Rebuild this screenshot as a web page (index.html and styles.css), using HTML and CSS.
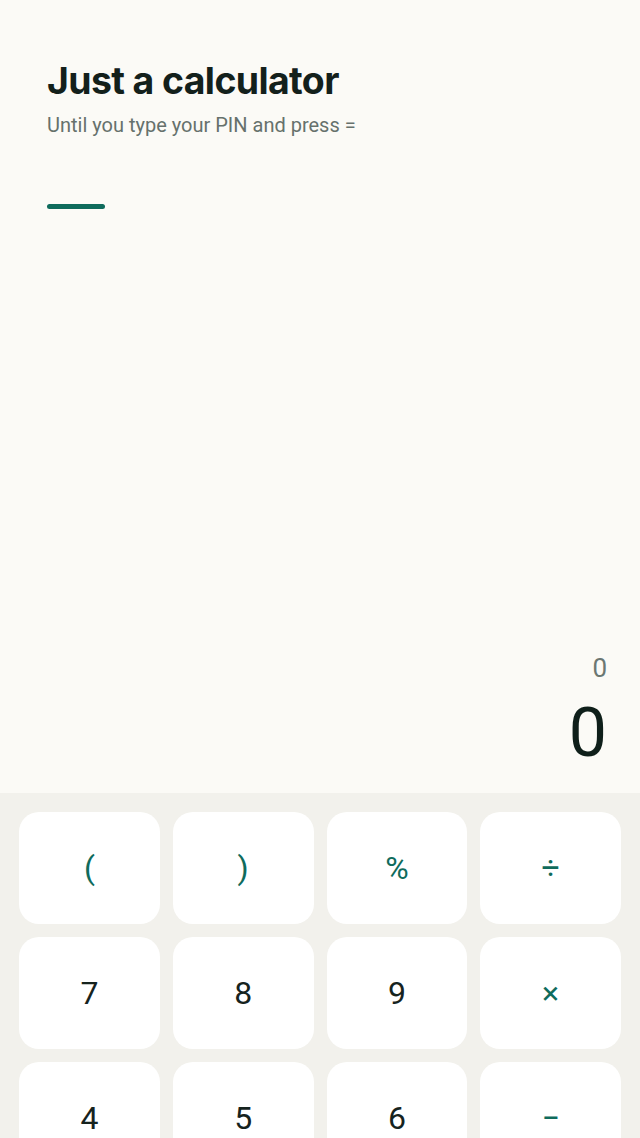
FILE: index.html
```html
<!DOCTYPE html>
<html lang="en">
<head>
<meta charset="utf-8">
<title>Just a calculator</title>
<link rel="stylesheet" href="styles.css">
</head>
<body>
<div class="app">
  <header class="head">
    <h1 class="title">Just a calculator</h1>
    <p class="sub">Until you type your PIN and press =</p>
    <div class="pin-line"></div>
  </header>
  <section class="display">
    <div class="expr">0</div>
    <div class="result">0</div>
  </section>
  <section class="pad">
    <button class="key op">(</button>
    <button class="key op">)</button>
    <button class="key op">%</button>
    <button class="key op">÷</button>
    <button class="key">7</button>
    <button class="key">8</button>
    <button class="key">9</button>
    <button class="key op">×</button>
    <button class="key">4</button>
    <button class="key">5</button>
    <button class="key">6</button>
    <button class="key op">−</button>
  </section>
</div>
</body>
</html>
```
FILE: styles.css
```css
* { box-sizing: border-box; }
html, body { margin: 0; padding: 0; }
body {
  background: #fbfaf6;
  font-family: Roboto, "Noto Sans", sans-serif;
  height: 1138px;
  overflow: hidden;
}
.app {
  display: flex;
  flex-direction: column;
  height: 1138px;
}
.head {
  padding: 58px 47px 0;
}
.title {
  margin: 0;
  font-family: Inter, "Noto Sans", sans-serif;
  font-weight: 700;
  font-size: 37.4px;
  letter-spacing: -0.6px;
  line-height: 46px;
  color: #13201b;
}
.sub {
  margin: 8px 0 0;
  font-size: 20px;
  line-height: 26px;
  color: #66716c;
}
.pin-line {
  margin-top: 66px;
  width: 58px;
  height: 5px;
  border-radius: 3px;
  background: #0f6b5c;
}
.display {
  flex: 1;
  display: flex;
  flex-direction: column;
  justify-content: flex-end;
  align-items: flex-end;
  padding: 0 33px 20px;
}
.expr {
  font-size: 26px;
  line-height: 32px;
  color: #6b7772;
}
.result {
  font-size: 68px;
  line-height: 80px;
  font-weight: 400;
  color: #0f1f1a;
  margin-top: 9px;
}
.pad {
  background: #f2f1ec;
  padding: 19px 19px 0;
  display: grid;
  grid-template-columns: repeat(4, 1fr);
  grid-auto-rows: 112px;
  column-gap: 13px;
  row-gap: 13px;
  height: 345px;
  flex: none;
}
.key {
  border: none;
  background: #ffffff;
  border-radius: 20px;
  font-family: Roboto, "Noto Sans", sans-serif;
  font-size: 32px;
  color: #16231e;
  padding: 0;
}
.key.op {
  color: #0f6b5c;
}
```
